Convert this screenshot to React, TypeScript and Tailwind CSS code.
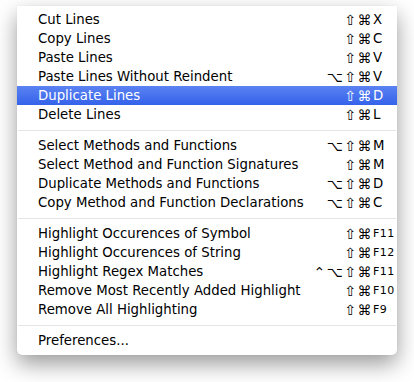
import React from "react";

type Item = { label: string; mods?: string; key?: string; fkey?: boolean; active?: boolean };

const groups: Item[][] = [
  [
    { label: "Cut Lines", mods: "⇧⌘", key: "X" },
    { label: "Copy Lines", mods: "⇧⌘", key: "C" },
    { label: "Paste Lines", mods: "⇧⌘", key: "V" },
    { label: "Paste Lines Without Reindent", mods: "⌥⇧⌘", key: "V" },
    { label: "Duplicate Lines", mods: "⇧⌘", key: "D", active: true },
    { label: "Delete Lines", mods: "⇧⌘", key: "L" },
  ],
  [
    { label: "Select Methods and Functions", mods: "⌥⇧⌘", key: "M" },
    { label: "Select Method and Function Signatures", mods: "⇧⌘", key: "M" },
    { label: "Duplicate Methods and Functions", mods: "⌥⇧⌘", key: "D" },
    { label: "Copy Method and Function Declarations", mods: "⌥⇧⌘", key: "C" },
  ],
  [
    { label: "Highlight Occurences of Symbol", mods: "⇧⌘", key: "F11", fkey: true },
    { label: "Highlight Occurences of String", mods: "⇧⌘", key: "F12", fkey: true },
    { label: "Highlight Regex Matches", mods: "⌃⌥⇧⌘", key: "F11", fkey: true },
    { label: "Remove Most Recently Added Highlight", mods: "⇧⌘", key: "F10", fkey: true },
    { label: "Remove All Highlighting", mods: "⇧⌘", key: "F9", fkey: true },
  ],
  [{ label: "Preferences..." }],
];

function Row({ item }: { item: Item }) {
  return (
    <div
      className={
        "flex h-[19px] items-center pt-px " +
        (item.active
          ? "bg-gradient-to-b from-[#5b82f2] to-[#3462ea] text-white"
          : "text-black")
      }
    >
      <span className="flex-1 pl-[21px] whitespace-nowrap">{item.label}</span>
      {item.mods && (
        <span className="flex items-center">
          <span className="text-[14px] tracking-[1.5px]">{item.mods}</span>
          <span
            className={
              "w-[24px] " + (item.fkey ? "text-[11px] tracking-[0.5px]" : "")
            }
          >
            {item.key}
          </span>
        </span>
      )}
    </div>
  );
}

export default function App() {
  return (
    <div className="h-[382px] w-[414px] bg-white pt-[6px] pl-[17px]">
      <div
        className="w-[380px] rounded-b-[5px] bg-white py-[4px] pb-[5px] text-[13.3px] shadow-[0_9px_22px_rgba(0,0,0,0.4),0_0_1px_rgba(0,0,0,0.15)]"
        style={{ fontFamily: '"DejaVu Sans", "Lucida Grande", sans-serif' }}
      >
        {groups.map((g, gi) => (
          <div key={gi}>
            {gi > 0 && (
              <div className="flex h-[12px] items-center px-[1px]">
                <div className="h-px w-full bg-[#e4e4e4]" />
              </div>
            )}
            {g.map((item) => (
              <Row key={item.label} item={item} />
            ))}
          </div>
        ))}
      </div>
    </div>
  );
}
